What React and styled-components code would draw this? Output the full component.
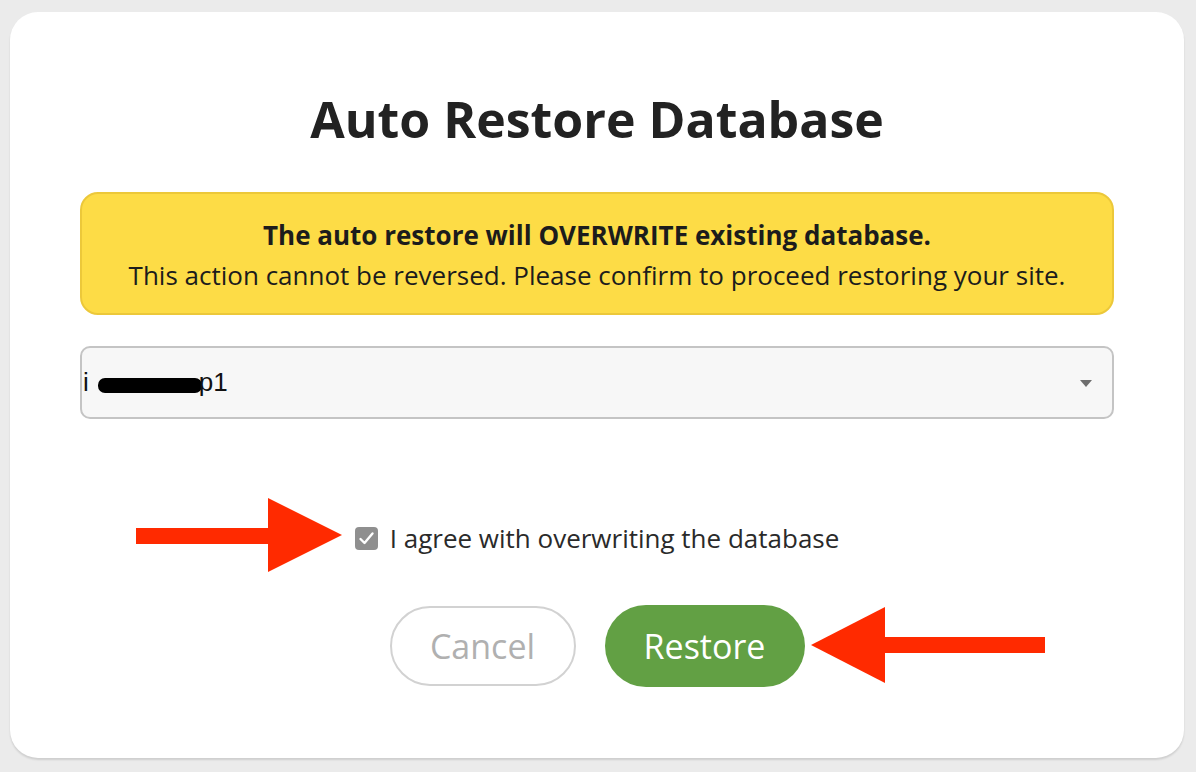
import styled, { createGlobalStyle } from "styled-components";

const GlobalStyle = createGlobalStyle`
  html, body {
    margin: 0;
    padding: 0;
    background: #ebebeb;
    font-family: "Open Sans", "Noto Sans", sans-serif;
  }
`;

const Page = styled.div`
  width: 1196px;
  height: 772px;
  padding: 12px 12px 14px 10px;
  box-sizing: border-box;
  position: relative;
`;

const Card = styled.div`
  height: 100%;
  background: #fff;
  border-radius: 28px;
  box-shadow: 0 2px 2px rgba(0, 0, 0, 0.12);
  padding: 0 70px;
  box-sizing: border-box;
  display: flex;
  flex-direction: column;
`;

const Title = styled.h1`
  margin: 78px 0 0;
  font-size: 50px;
  line-height: 58px;
  font-weight: 700;
  color: #222;
  text-align: center;
`;

const Warning = styled.div`
  margin-top: 44px;
  height: 123px;
  box-sizing: border-box;
  background: #fddc46;
  border: 2px solid #ecc83a;
  border-radius: 18px;
  padding: 21px 20px 0;
  text-align: center;
  color: #1c1c1c;
  font-size: 26px;
  line-height: 40px;
`;

const Strong = styled.div`
  font-weight: 700;
`;

const Select = styled.div`
  margin-top: 31px;
  height: 73px;
  box-sizing: border-box;
  background: #f7f7f7;
  border: 2px solid #c4c4c4;
  border-radius: 10px;
  display: flex;
  align-items: center;
  justify-content: space-between;
  padding: 0 20px 0 1px;
  font-family: "Liberation Sans", Arial, sans-serif;
  font-size: 26px;
  color: #111;
`;

const Value = styled.span`
  display: flex;
  align-items: center;
`;

const Redacted = styled.span`
  display: inline-block;
  width: 104px;
  height: 15px;
  background: #000;
  border-radius: 7px;
  margin: 5px -3px 0 9px;
`;

const Caret = styled.span`
  width: 0;
  height: 0;
  border-left: 6px solid transparent;
  border-right: 6px solid transparent;
  border-top: 7px solid #6e6e6e;
  margin-top: 2px;
`;

const AgreeRow = styled.label`
  margin-top: 101px;
  display: flex;
  align-items: center;
  justify-content: center;
  gap: 12px;
  font-size: 26px;
  line-height: 36px;
  color: #2a2a2a;
`;

const Check = styled.span`
  width: 23px;
  height: 23px;
  border-radius: 4px;
  background: #8f8f8f;
  display: flex;
  align-items: center;
  justify-content: center;
`;

const Buttons = styled.div`
  margin-top: 49px;
  display: flex;
  align-items: center;
  justify-content: center;
  gap: 29px;
`;

const Button = styled.button`
  height: ${(p) => (p.$primary ? "82px" : "80px")};
  width: ${(p) => (p.$primary ? "200px" : "186px")};
  padding: 0;
  border-radius: 41px;
  border: ${(p) => (p.$primary ? "none" : "2px solid #d2d2d2")};
  background: ${(p) => (p.$primary ? "#62a044" : "#fff")};
  color: ${(p) => (p.$primary ? "#fff" : "#b0b0b0")};
  font-family: "Open Sans", sans-serif;
  font-size: 34px;
  cursor: pointer;
`;

const Arrow = styled.svg`
  position: absolute;
  left: ${(p) => p.$x}px;
  top: ${(p) => p.$y}px;
`;

export default function App() {
  return (
    <Page>
      <GlobalStyle />
      <Card>
        <Title>Auto Restore Database</Title>
        <Warning>
          <Strong>The auto restore will OVERWRITE existing database.</Strong>
          <div>
            This action cannot be reversed. Please confirm to proceed restoring
            your site.
          </div>
        </Warning>
        <Select>
          <Value>
            i<Redacted />p1
          </Value>
          <Caret />
        </Select>
        <AgreeRow>
          <Check>
            <svg width="17" height="15" viewBox="0 0 17 15">
              <path
                d="M2.5 8 L6.5 12 L14.5 2.5"
                fill="none"
                stroke="#fff"
                strokeWidth="2.4"
                strokeLinecap="round"
                strokeLinejoin="round"
              />
            </svg>
          </Check>
          I agree with overwriting the database
        </AgreeRow>
        <Buttons>
          <Button>Cancel</Button>
          <Button $primary>Restore</Button>
        </Buttons>
      </Card>
      <Arrow $x={136} $y={498} width="208" height="76" viewBox="0 0 208 76">
        <rect x="0" y="30" width="134" height="16" fill="#ff2a00" />
        <polygon points="132,0 206,37 132,74" fill="#ff2a00" />
      </Arrow>
      <Arrow $x={810} $y={606} width="236" height="78" viewBox="0 0 236 78">
        <polygon points="1,39 75,1 75,77" fill="#ff2a00" />
        <rect x="73" y="31" width="162" height="16" fill="#ff2a00" />
      </Arrow>
    </Page>
  );
}
